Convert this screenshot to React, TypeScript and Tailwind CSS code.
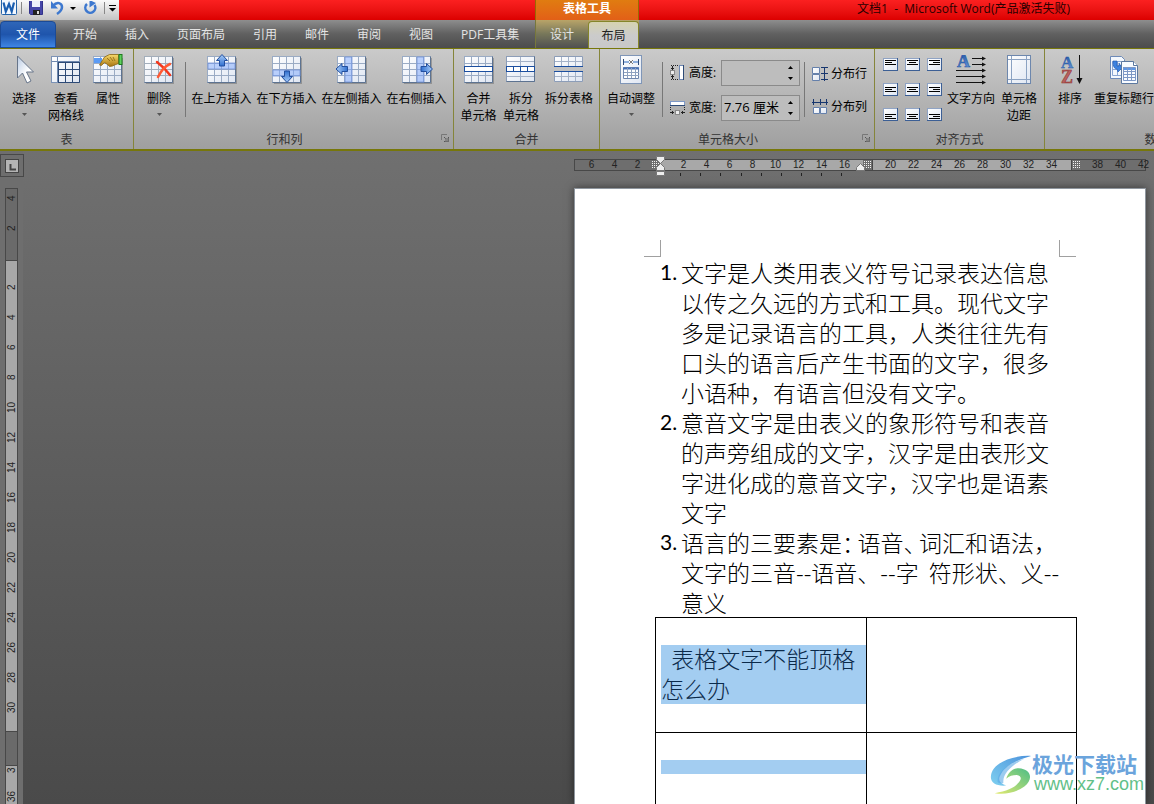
import type { ReactNode } from 'react';

const UI_FONT = "font-['Open_Sans','Noto_Sans_CJK_SC',sans-serif]";

const TABS = ['开始', '插入', '页面布局', '引用', '邮件', '审阅', '视图', 'PDF工具集'];

interface GridProps {
  line?: string;
  children?: ReactNode;
}

function GridIcon({ line = '#9aabc4', children }: GridProps) {
  return (
    <svg width="30" height="30" viewBox="0 0 30 30" className="overflow-visible" aria-hidden="true">
      <path d="M2 28.5h27.5V3" fill="none" stroke="#000" strokeOpacity=".22" />
      <rect x=".5" y="1.5" width="28" height="26" fill="url(#cell)" stroke={line} />
      <path d="M7.5 2v25M14.5 2v25M21.5 2v25M1 8.5h27M1 14.5h27M1 20.5h27" stroke={line} />
      <path d="M28.5 1.5v26h-28" fill="none" stroke="#5d7391" />
      {children}
    </svg>
  );
}

function SvgDefs() {
  return (
    <svg width="0" height="0" className="absolute" aria-hidden="true">
      <defs>
        <linearGradient id="cell" x1="0" y1="0" x2="1" y2="1">
          <stop offset="0" stopColor="#fff" />
          <stop offset="1" stopColor="#dfe6f2" />
        </linearGradient>
        <linearGradient id="arrow" x1="0" y1="0" x2="0" y2="1">
          <stop offset="0" stopColor="#a9cdf8" />
          <stop offset="1" stopColor="#2f6fd0" />
        </linearGradient>
        <linearGradient id="cursor" x1="0" y1="0" x2="1" y2="1">
          <stop offset="0" stopColor="#b9cbe4" />
          <stop offset=".6" stopColor="#fff" />
        </linearGradient>
        <linearGradient id="hand" x1="0" y1="0" x2="0" y2="1">
          <stop offset="0" stopColor="#f8da6a" />
          <stop offset="1" stopColor="#a87412" />
        </linearGradient>
        <linearGradient id="letterA" x1="0" y1="0" x2="0" y2="1">
          <stop offset="0" stopColor="#1d4fa0" />
          <stop offset="1" stopColor="#6fa0e0" />
        </linearGradient>
        <linearGradient id="swooshBlue" x1="1" y1="0" x2="0" y2="1">
          <stop offset="0" stopColor="#4d93dc" />
          <stop offset="1" stopColor="#7fd0f0" />
        </linearGradient>
        <linearGradient id="swooshGreen" x1="0" y1="1" x2="1" y2="0">
          <stop offset="0" stopColor="#e3ea70" />
          <stop offset="1" stopColor="#4dbd86" />
        </linearGradient>
      </defs>
    </svg>
  );
}

function CursorIcon() {
  return (
    <svg width="30" height="30" viewBox="0 0 30 30" aria-hidden="true">
      <path d="M8.5 1v22l5-5 4.5 10 4-2-4.500-9h7z" fill="url(#cursor)" stroke="#67758a" />
    </svg>
  );
}

function ViewGridIcon() {
  return (
    <svg width="30" height="30" viewBox="0 0 30 30" aria-hidden="true">
      <rect x=".5" y="1.5" width="28" height="26" fill="url(#cell)" stroke="#7c93b6" />
      <path d="M6.500 2v25M1 6.5h27" stroke="#6f88ae" />
      <path d="M7.5 7v20M14.5 7v20M21.5 7v20M7 7.5h21M7 14.5h21M7 20.5h21" stroke="#2d4a76" />
      <path d="M28.5 7v20.5H7" fill="none" stroke="#2d4a76" />
    </svg>
  );
}

function PropertiesIcon() {
  return (
    <GridIcon>
      <rect x="1" y="3" width="8" height="5" fill="#5b9bf5" />
      <path d="M6.500 10l5-8 5-2.500h9v9l-4 1.5-2 1-3 .5-2-2-3-2-3 3z" fill="url(#hand)" stroke="#8a6412" strokeWidth=".8" />
      <path d="M14 3l3 3M17 2l3 4M20 2l2 4" stroke="#8a6412" strokeWidth=".8" />
      <rect x="26" y="-.5" width="3" height="10" fill="#5fd05f" stroke="#1d7a1d" />
    </GridIcon>
  );
}

function DeleteIcon() {
  return (
    <GridIcon line="#a3aebb">
      <path d="M13 7c4 3 9 8 13 13" stroke="#f4371c" strokeWidth="2.500" fill="none" strokeLinecap="round" />
      <path d="M26 9c-5 2-9 7-12 13" stroke="#ff5a34" strokeWidth="2.500" fill="none" strokeLinecap="round" />
    </GridIcon>
  );
}

function InsertIcon({ side }: { side: 'up' | 'down' | 'left' | 'right' }) {
  const band = {
    up: 'M1 8h27v6H1z',
    down: 'M1 15h27v6H1z',
    left: 'M8 2h7v25H8z',
    right: 'M15 2h7v25h-7z',
  }[side];
  const turn = {
    up: 'translate(0 -1)',
    down: 'rotate(180 15 15) translate(0 2)',
    left: 'translate(-1.500 29) rotate(-90)',
    right: 'translate(31 -1) rotate(90)',
  }[side];
  return (
    <GridIcon>
      <path d={band} fill="#7ea8fb" fillOpacity=".5" stroke="#7593d6" strokeWidth=".8" />
      <path d="M15 .5l5.500 6h-3v5.500h-5V6.500h-3z" transform={turn} fill="url(#arrow)" stroke="#234f9e" />
    </GridIcon>
  );
}

function MergeIcon() {
  return (
    <GridIcon>
      <rect x=".5" y="11.5" width="28" height="5" fill="#fff" stroke="#1c4fa0" />
    </GridIcon>
  );
}

function SplitCellsIcon() {
  return (
    <svg width="30" height="30" viewBox="0 0 30 30" aria-hidden="true">
      <rect x=".5" y="1.5" width="28" height="25" fill="url(#cell)" stroke="#8c9db8" />
      <path d="M14.5 2v25M1 6.5h27M1 21.5h27" stroke="#a4b2c8" />
      <path d="M28.5 1.5v25h-28" fill="none" stroke="#5d7391" />
      <rect x=".5" y="11.5" width="28" height="5" fill="#fff" stroke="#1c4fa0" />
      <path d="M7.5 11v6M14.5 11v6M21.5 11v6" stroke="#1c4fa0" />
    </svg>
  );
}

function SplitTableIcon() {
  return (
    <svg width="30" height="30" viewBox="0 0 30 30" aria-hidden="true">
      <path d="M.5 1.5h28v10H.5zM.5 16.5h28v10H.5z" fill="url(#cell)" stroke="#8c9db8" />
      <path d="M7.5 2v9M14.5 2v9M21.5 2v9M1 6.5h27M7.5 17v9M14.5 17v9M21.5 17v9M1 21.5h27" stroke="#a4b2c8" />
      <path d="M0 11.5h29M0 16.5h29" stroke="#1c4fa0" />
    </svg>
  );
}

function AutoFitIcon() {
  return (
    <svg width="30" height="30" viewBox="0 0 30 30" aria-hidden="true">
      <rect x="4.5" y=".5" width="21" height="28" fill="url(#cell)" stroke="#7f96b8" />
      <path d="M7.5 4v6M22.5 4v6" stroke="#2d4a76" />
      <path d="M8 7h5M22 7h-5" stroke="#2d6ac0" />
      <path d="M13 5l4 4M17 5l-4 4" stroke="#555" strokeWidth=".8" />
      <path d="M7.5 12.5h15v11h-15z" fill="#fff" stroke="#6f86ad" />
      <path d="M7 13.5h16" stroke="#4a74b8" strokeWidth="2" />
      <path d="M11.5 13v10M15.5 13v10M19.5 13v10M8 17.5h15M8 20.5h15" stroke="#8fa2c0" />
    </svg>
  );
}

function HeightIcon() {
  return (
    <svg width="15" height="16" viewBox="0 0 15 16" aria-hidden="true">
      <path d="M1 .5h1M3 .5h1M5 .5h1M7 .5h1M1 14.5h1M3 14.5h1M5 14.5h1M7 14.5h1" stroke="#222" />
      <path d="M2.500 1v4M1 3.500h3M2.500 10v4M1 11.500h3" stroke="#222" />
      <rect x=".5" y="5.500" width="4" height="4" fill="#eee" stroke="#888" />
      <rect x="9.5" y=".5" width="4" height="14" fill="#fff" stroke="#6d87b3" />
      <path d="M13.5 0v15" stroke="#2d4a76" />
    </svg>
  );
}

function WidthIcon() {
  return (
    <svg width="15" height="16" viewBox="0 0 15 16" aria-hidden="true">
      <rect x=".5" y="1.5" width="14" height="4" fill="#fff" stroke="#7d98c6" />
      <path d="M0 5.500h15" stroke="#2d4a76" />
      <path d="M.5 7v1M.5 9v1M14.5 7v1M14.5 9v1M0 12.500h4M11 12.500h4M2.500 11v3M12.500 11v3" stroke="#222" />
      <rect x="5.500" y="10.500" width="4" height="4" fill="#eee" stroke="#888" />
    </svg>
  );
}

function RowsIcon() {
  return (
    <svg width="16" height="16" viewBox="0 0 16 16" aria-hidden="true">
      <path d="M.5 1.5h7v6h-7zM.5 8.500h7v6h-7z" fill="url(#cell)" stroke="#6580ab" />
      <path d="M9 1.5h7M9 7.5h7M9 13.5h7M12.5 1v14" stroke="#17366e" />
    </svg>
  );
}

function ColsIcon() {
  return (
    <svg width="16" height="16" viewBox="0 0 16 16" aria-hidden="true">
      <path d="M1.5 8.5h6v6h-6zM8.500 8.500h6v6h-6z" fill="url(#cell)" stroke="#6580ab" />
      <path d="M1.5 0v6M8.5 0v6M14.5 0v6M0 3.5h16" stroke="#17366e" />
    </svg>
  );
}

function AlignIcon({ h, v }: { h: number; v: number }) {
  return (
    <svg width="15" height="14" viewBox="0 0 15 14" aria-hidden="true">
      <rect x=".5" y=".5" width="14" height="12" fill="url(#cell)" stroke="#8fa3c4" />
      <path d="M14.5 0v13M0 12.500h15" stroke="#3c5f95" />
      {[11, 7, 11].map((w, i) => (
        <path key={i} d={`M${2 + ((11 - w) * h) / 2} ${2.5 + i * 2 + v * 2}h${w}`} stroke="#000" />
      ))}
    </svg>
  );
}

function TextDirectionIcon() {
  return (
    <svg width="30" height="30" viewBox="0 0 30 30" aria-hidden="true">
      <text x="1" y="12" fontFamily="Liberation Serif" fontWeight="bold" fontSize="18" fill="url(#letterA)" stroke="#1d4fa0" strokeWidth=".5">A</text>
      <path d="M16 3.500h12M16 9.500h12M0 15.500h28M0 21.500h28M0 27.500h28" stroke="#111" />
      <path d="M26 1.500l4 2-4 2zM26 7.500l4 2-4 2zM26 13.500l4 2-4 2zM26 19.500l4 2-4 2zM26 25.500l4 2-4 2z" fill="#111" />
    </svg>
  );
}

function MarginsIcon() {
  return (
    <svg width="30" height="30" viewBox="0 0 30 30" aria-hidden="true">
      <rect x="3.5" y=".5" width="23" height="28" fill="url(#cell)" stroke="#6d87ad" />
      <path d="M7.5 1v27M22.5 1v27M4 4.5h22M4 24.5h22" stroke="#8ba2c2" />
    </svg>
  );
}

function SortIcon() {
  return (
    <svg width="30" height="30" viewBox="0 0 30 30" aria-hidden="true">
      <text x="6" y="13" fontFamily="Liberation Serif" fontWeight="bold" fontSize="17" fill="url(#letterA)" stroke="#1d4fa0" strokeWidth=".4">A</text>
      <text x="6" y="28" fontFamily="Liberation Serif" fontWeight="bold" fontSize="18" fill="#b8615f" stroke="#8c2f2e" strokeWidth=".5">Z</text>
      <path d="M24.500 0v26" stroke="#111" />
      <path d="M21.500 23h6l-3 6z" fill="#111" />
    </svg>
  );
}

function RepeatHeaderIcon() {
  return (
    <svg width="30" height="30" viewBox="0 0 30 30" aria-hidden="true">
      <path d="M1.5 1.5h11l3 3v19h-14z" fill="#f4f8fd" stroke="#6d8ab8" />
      <path d="M3.500 6.500h9v14h-9zM3 10.500h10M3 14.500h10M8.500 6v14" fill="none" stroke="#8aa6d4" />
      <path d="M4 6h4v5h2V8l3 5-4 4-1-3c-3 0-4-3-4-8z" fill="#3d82e0" stroke="#1d55ac" strokeWidth=".6" />
      <path d="M12.5 6.5h12l4 4v18h-16z" fill="#f8fbff" stroke="#5c789f" />
      <path d="M24.5 6.5v4h4" fill="#fff" stroke="#5c789f" />
      <rect x="14" y="12" width="12" height="3" fill="#5c97e8" />
      <path d="M14.500 12.500h12v13h-12zM14 16.500h13M14 19.500h13M14 22.500h13M18.500 12v13M22.500 12v13" fill="none" stroke="#7d98c6" />
    </svg>
  );
}

function Caret() {
  return (
    <svg width="5" height="3" viewBox="0 0 5 3" className="mx-auto mt-1.5" aria-hidden="true">
      <path d="M0 0h5L2.500 3z" fill="#555" />
    </svg>
  );
}

interface BigButtonProps {
  icon: ReactNode;
  label: string;
  label2?: string;
  menu?: boolean;
  width: string;
}

function BigButton({ icon, label, label2, menu, width }: BigButtonProps) {
  return (
    <button className={`flex flex-col items-center shrink-0 pt-1 ${width}`}>
      {icon}
      <span className="mt-[5px] leading-[17px] whitespace-nowrap">{label}</span>
      {label2 && <span className="leading-[17px] whitespace-nowrap">{label2}</span>}
      {menu && <Caret />}
    </button>
  );
}

interface GroupProps {
  title: string;
  width: string;
  launcher?: boolean;
  children: ReactNode;
}

function Group({ title, width, launcher, children }: GroupProps) {
  return (
    <section className={`relative flex flex-col shrink-0 border-r border-[#85853a] ${width}`}>
      <div className="flex flex-1 px-[3px] pt-[2px]">{children}</div>
      <div className={`h-5 text-center leading-[22px] -mt-px text-[#333] ${launcher ? 'pr-[18px]' : ''}`}>{title}</div>
      {launcher && (
        <button aria-label={`${title}选项`} className="absolute right-1 bottom-[7px]">
          <svg width="8" height="8" viewBox="0 0 8 8" className="block">
            <path d="M.5 6V.5H6" fill="none" stroke="#777" />
            <path d="M3 3l2 2M7.500 3v5M3 7.500h5" stroke="#555" />
            <path d="M4 4h4v4H4z" fill="#777" fillOpacity=".7" />
          </svg>
        </button>
      )}
    </section>
  );
}

function Separator() {
  return <div className="w-px h-[55px] mt-[11px] shrink-0 bg-[#777]" />;
}

function SizeField({ id, label, icon, value }: { id: string; label: string; icon: ReactNode; value: string }) {
  return (
    <div className="flex items-center h-[26px]">
      {icon}
      <label htmlFor={id} className="ml-1 w-8 whitespace-nowrap">{label}</label>
      <div className="flex items-center w-[79px] h-[26px] border border-[#8a8a8a] bg-[#bdbdbd]">
        <input id={id} defaultValue={value} className="w-0 flex-1 px-[2px] bg-transparent text-[13px] outline-none" />
        <div className="flex flex-col gap-2 pr-1.5">
          <button aria-label={`${label}增加`}>
            <svg width="5" height="3" viewBox="0 0 5 3" className="block"><path d="M0 3h5L2.500 0z" /></svg>
          </button>
          <button aria-label={`${label}减少`}>
            <svg width="5" height="3" viewBox="0 0 5 3" className="block"><path d="M0 0h5L2.500 3z" /></svg>
          </button>
        </div>
      </div>
    </div>
  );
}

function QuickAccess() {
  return (
    <div className="flex items-center w-[119px] h-5 shrink-0 pl-px pb-1 bg-linear-to-b from-[#fafafa] to-[#c4c4c4]">
      <svg width="16" height="16" viewBox="0 0 16 16" aria-hidden="true">
        <rect x=".5" y="-1" width="15" height="15.500" rx="1" fill="#f3f8fe" stroke="#2463a8" />
        <path d="M2.500 2.500l2.300 9L8 4l2.700 7.500 2.300-9" fill="none" stroke="#1a5eb0" strokeWidth="2.200" />
      </svg>
      <div className="w-px h-3 ml-1 bg-[#888]" />
      <button aria-label="保存" className="ml-[7px]">
        <svg width="14" height="14" viewBox="0 0 14 14" className="block">
          <path d="M.5-1h13v14.500h-12l-1-1z" fill="#4646a8" stroke="#32328a" />
          <rect x="3" y="0" width="8" height="6" fill="#eef0fb" />
          <rect x="4" y="9" width="7" height="5" fill="#222" />
          <rect x="8" y="10" width="2" height="3" fill="#ddd" />
        </svg>
      </button>
      <button aria-label="撤消" className="ml-2 flex items-center">
        <svg width="13" height="14" viewBox="0 0 13 14">
          <path d="M2 5c4-5 9-3 9 1 0 3-2 5-5 7" fill="none" stroke="#3d78cf" strokeWidth="2.500" />
          <path d="M0 0v7.500h7z" fill="#3d78cf" />
        </svg>
        <svg width="6" height="3" viewBox="0 0 6 3" className="ml-1.5"><path d="M0 0h6L3 3z" /></svg>
      </button>
      <button aria-label="恢复" className="ml-2">
        <svg width="14" height="14" viewBox="0 0 14 14" className="block">
          <path d="M3 3a5 5 0 1 0 7.500 1" fill="none" stroke="#3d78cf" strokeWidth="2.500" />
          <path d="M5.500-1v7.500L12 2z" fill="#3d78cf" />
        </svg>
      </button>
      <div className="w-px h-3 ml-1.5 bg-[#888]" />
      <button aria-label="自定义快速访问工具栏" className="ml-1">
        <svg width="7" height="7" viewBox="0 0 7 7" className="block"><path d="M0 0h7v1H0zM0 3h7L3.500 6.500z" /></svg>
      </button>
    </div>
  );
}

function TitleBar() {
  return (
    <header className="flex h-5 text-xs leading-[18px] bg-linear-to-b from-[#fb2020] to-[#dc0000]">
      <QuickAccess />
      <div className="w-[416px] shrink-0" />
      <div className="w-[104px] shrink-0 border-x border-[#9a6a00] bg-linear-to-b from-[#e07c10] to-[#e25f17] text-center font-bold text-white">
        表格工具
      </div>
      <div className="flex-1 pr-[84px] text-right whitespace-pre text-[#2a0000]">
        文档1{'  '}- {' '}Microsoft Word(产品激活失败)
      </div>
    </header>
  );
}

function TabRow() {
  return (
    <nav className="flex h-7 text-xs leading-[30px] text-[#e4e4e4] bg-linear-to-b from-[#8e8e8e] via-[#606060] to-[#4c4c4c]">
      <button className="w-14 mt-px mr-[3px] rounded-t border border-[#1b4a96] bg-linear-to-b from-[#2f66b8] via-[#1f55ac] to-[#3f86e4] text-white leading-[26px]">
        文件
      </button>
      <div className="flex w-[476px] shrink-0">
        {TABS.map(tab => (
          <button key={tab} className="px-3.5 whitespace-nowrap">{tab}</button>
        ))}
      </div>
      <div className="flex w-[104px] shrink-0 border-l border-[#77773c] bg-linear-to-b from-[#b9a468] via-[#77775a] to-[#505050]">
        <button className="w-[52px]">设计</button>
        <button className="flex-1 mt-px h-7 rounded-t border border-b-0 border-[#85852a] bg-linear-to-b from-[#d6d3b0] via-[#cbcbcb] to-[#c8c8c8] text-[#222] leading-[26px]">
          布局
        </button>
      </div>
    </nav>
  );
}

function Ribbon() {
  return (
    <div className="flex h-[103px] shrink-0 text-xs text-black bg-linear-to-b from-[#cacaca] to-[#9f9f9f] border-t border-b-2 border-[#77770a]">
      <Group title="表" width="w-[134px]">
        <BigButton icon={<CursorIcon />} label="选择" menu width="w-[42px]" />
        <BigButton icon={<ViewGridIcon />} label="查看" label2="网格线" width="w-[42px]" />
        <BigButton icon={<PropertiesIcon />} label="属性" width="w-[42px]" />
      </Group>
      <Group title="行和列" width="w-[320px]" launcher>
        <BigButton icon={<DeleteIcon />} label="删除" menu width="w-[44px]" />
        <div className="w-1" />
        <Separator />
        <div className="w-[3px]" />
        <BigButton icon={<InsertIcon side="up" />} label="在上方插入" width="w-[65px]" />
        <BigButton icon={<InsertIcon side="down" />} label="在下方插入" width="w-[65px]" />
        <BigButton icon={<InsertIcon side="left" />} label="在左侧插入" width="w-[65px]" />
        <BigButton icon={<InsertIcon side="right" />} label="在右侧插入" width="w-[65px]" />
      </Group>
      <Group title="合并" width="w-[146px]">
        <BigButton icon={<MergeIcon />} label="合并" label2="单元格" width="w-[43px]" />
        <BigButton icon={<SplitCellsIcon />} label="拆分" label2="单元格" width="w-[42px]" />
        <BigButton icon={<SplitTableIcon />} label="拆分表格" width="w-[54px]" />
      </Group>
      <Group title="单元格大小" width="w-[275px]" launcher>
        <BigButton icon={<AutoFitIcon />} label="自动调整" menu width="w-[56px]" />
        <div className="w-[3px]" />
        <Separator />
        <div className="flex flex-col gap-[9px] pl-[7px] pr-1 pt-[9px]">
          <SizeField id="row-height" label="高度:" icon={<HeightIcon />} value="" />
          <SizeField id="col-width" label="宽度:" icon={<WidthIcon />} value="7.76 厘米" />
        </div>
        <Separator />
        <div className="flex flex-col gap-[17px] pl-[7px] pt-[15px] whitespace-nowrap">
          <button className="flex items-center gap-[3px] leading-4"><RowsIcon />分布行</button>
          <button className="flex items-center gap-[3px] leading-4"><ColsIcon />分布列</button>
        </div>
      </Group>
      <Group title="对齐方式" width="w-[170px]">
        <div className="grid grid-cols-3 gap-x-[7px] gap-y-[11px] content-start pl-[5px] pt-[7px]">
          {[0, 1, 2].map(v => [0, 1, 2].map(h => (
            <button key={`${v}-${h}`} aria-label={`对齐 ${v + 1}-${h + 1}`}><AlignIcon h={h} v={v} /></button>
          )))}
        </div>
        <BigButton icon={<TextDirectionIcon />} label="文字方向" width="w-[58px]" />
        <BigButton icon={<MarginsIcon />} label="单元格" label2="边距" width="w-[38px]" />
      </Group>
      <Group title="数据" width="w-[224px]">
        <BigButton icon={<SortIcon />} label="排序" width="w-[44px]" />
        <BigButton icon={<RepeatHeaderIcon />} label="重复标题行" width="w-[64px]" />
      </Group>
    </div>
  );
}

const H_MARKS = ['6', '4', '2', '', '2', '4', '6', '8', '10', '12', '14', '16', '', '20', '22', '24', '26', '28', '30', '32', '34', '', '38', '40', '42'];
const V_MARKS = ['2', '4', '6', '8', '10', '12', '14', '16', '18', '20', '22', '24', '26', '28', '30'];

function MoveMark() {
  return (
    <svg width="9" height="10" viewBox="0 0 9 10" className="block shrink-0" aria-hidden="true">
      <path d="M1.5 1v8M3.5 1v8M5.5 1v8M7.5 1v8" stroke="#f4f4f4" strokeDasharray="1 1" />
    </svg>
  );
}

function HorizontalRuler() {
  return (
    <div className="relative w-[572px] h-3 shrink-0 flex border border-[#484848] bg-[#6e6e6e] font-['Liberation_Sans',sans-serif] text-[10px] leading-[10px] text-[#222]">
      <div className="w-[76px]" />
      <MoveMark />
      <div className="w-[203px] bg-[#a8a8a8]" />
      <MoveMark />
      <div className="w-[200px] bg-[#a8a8a8] border-x border-[#484848]" />
      <MoveMark />
      <div className="absolute left-[5px] top-0 flex">
        {H_MARKS.map((mark, i) => (
          <span key={i} className="w-[23px] text-center">{mark}</span>
        ))}
      </div>
      <svg width="220" height="22" viewBox="0 0 220 22" className="absolute left-[76px] -top-1" aria-hidden="true">
        <path d="M5.5.5h8v3l-4 4-4-4zM5.5 14.5v-3l4-4 4 4v3zM5.5 15.5h8v4h-8z" fill="#eee" stroke="#777" />
        <path d="M29.5 17v3M49.5 17v3M69.5 17v3M90.5 17v3M110.5 17v3M130.5 17v3M150.5 17v3M170.5 17v3M190.5 17v3" stroke="#222" />
        <path d="M205.5 14.5v-3l4-4 4 4v3z" fill="#eee" stroke="#777" />
      </svg>
    </div>
  );
}

function VerticalRuler() {
  const mark = 'flex items-center justify-center h-[30px] [writing-mode:vertical-rl] rotate-180';
  return (
    <div className="w-[13px] ml-[5px] flex-1 border border-b-0 border-[#484848] font-['Liberation_Sans',sans-serif] text-[10px] leading-[11px] text-[#222] overflow-hidden">
      <div className="flow-root h-[71px] bg-[#6a6a6a]">
        <div className="-mt-1.5">
          <div className={mark}>4</div>
          <div className={mark}>2</div>
        </div>
      </div>
      <div className="h-[472px] pt-[11px] bg-[#a8a8a8] border-y border-[#484848]">
        {V_MARKS.map(m => <div key={m} className={mark}>{m}</div>)}
      </div>
      <div className="h-[33px] bg-[#6a6a6a]" />
      <div className="h-12 bg-[#a8a8a8] border-t border-[#484848]">
        <div className="flex items-center justify-center h-2 [writing-mode:vertical-rl] rotate-180">3</div>
        <div className="flex items-center justify-center h-[44px] [writing-mode:vertical-rl] rotate-180">36</div>
      </div>
    </div>
  );
}

function ListItem({ n, children }: { n: number; children: ReactNode }) {
  return (
    <li className="flex">
      <span className="w-[21px] shrink-0 font-['Lato',sans-serif] font-normal text-[21px]">{n}.</span>
      <p className="flex-1 whitespace-pre">{children}</p>
    </li>
  );
}

function Narrow({ children }: { children: ReactNode }) {
  return <span className="mr-1 [font-feature-settings:'halt']">{children}</span>;
}

function DocumentPage() {
  return (
    <article className="w-[572px] flex-1 mt-[17px] px-[69px] pt-[51px] shrink-0 overflow-hidden border border-b-0 border-[#8f969e] bg-white shadow-[0_0_8px_rgba(0,0,0,0.5)] font-['Noto_Sans_CJK_SC',sans-serif] font-light text-[23px] leading-[30px] text-black">
      <div className="flex justify-between h-[17px]">
        <div className="w-[17px] border-r border-b border-[#a0a0a0]" />
        <div className="w-[17px] border-l border-b border-[#a0a0a0]" />
      </div>
      <ol className="pl-4">
        <ListItem n={1}>
          文字是人类用表义符号记录表达信息<br />
          以传之久远的方式和工具。现代文字<br />
          多是记录语言的工具，人类往往先有<br />
          口头的语言后产生书面的文字，很多<br />
          小语种，有语言但没有文字。
        </ListItem>
        <ListItem n={2}>
          意音文字是由表义的象形符号和表音<br />
          的声旁组成的文字，汉字是由表形文<br />
          字进化成的意音文字，汉字也是语素<br />
          文字
        </ListItem>
        <ListItem n={3}>
          语言的三要素是<Narrow>：</Narrow>语音<Narrow>、</Narrow>词汇和语法，<br />
          文字的三音--语音、--字{'  '}符形状、义--<br />
          意义
        </ListItem>
      </ol>
      <table className="w-[422px] ml-[11px] table-fixed border-collapse">
        <tbody>
          <tr className="h-[115px]">
            <td className="border border-black pl-[5px] pt-[27px] align-top text-[#0b2a4a]">
              <div className="flow-root h-[59px] bg-[#a3cdf1]">
                <p className="-mt-0.5 whitespace-pre">{'  '}表格文字不能顶格<br />怎么办</p>
              </div>
            </td>
            <td className="border border-black" />
          </tr>
          <tr className="h-[115px]">
            <td className="border border-black pl-[5px] pt-[27px] align-top">
              <div className="h-3.5 bg-[#a3cdf1]" />
            </td>
            <td className="border border-black" />
          </tr>
        </tbody>
      </table>
    </article>
  );
}

function Watermark() {
  return (
    <div className="absolute right-2.5 bottom-1.5 flex items-center">
      <svg width="42" height="42" viewBox="0 0 44 42" aria-hidden="true">
        <path d="M43 1C22 0 2 9 1 22c-1 7 6 11 16 10C10 30 8 26 11 21 15 12 28 5 43 1z" fill="url(#swooshBlue)" />
        <path d="M8 28C7 18 20 8 36 4 24 10 13 19 14 29c0 1-5 1-6-1z" fill="#5aa8e4" fillOpacity=".6" />
        <path d="M30 14c13 1 16 11 6 19-8 6-20 9-31 7 12-2 20-5 24-10 4-4 5-8-1-9-4 0-8 1-11 4 2-7 7-11 13-11z" fill="url(#swooshGreen)" />
      </svg>
      <div className="flex flex-col pb-1">
        <span className="font-['Noto_Sans_CJK_SC',sans-serif] text-[21px] leading-[22px] font-bold text-[#6ba4dc]">极光下载站</span>
        <span className="pl-0.5 font-['Liberation_Sans',sans-serif] text-lg leading-5 text-[#62c088]">www.xz7.com</span>
      </div>
    </div>
  );
}

export default function App() {
  return (
    <div className={`relative flex flex-col h-screen overflow-hidden bg-[#666] ${UI_FONT}`}>
      <SvgDefs />
      <TitleBar />
      <TabRow />
      <Ribbon />
      <main className="flex flex-1 min-h-0 bg-linear-to-b from-[#707070] to-[#4a4a4a]">
        <aside className="flex flex-col w-[23px] shrink-0 bg-[#6e6e6e]">
          <button aria-label="制表符" className="flex items-center justify-center w-6 h-[23px] mt-[3px] mb-[11px] shrink-0 border border-[#484848]">
            <svg width="14" height="14" viewBox="0 0 14 14">
              <rect x=".5" y=".5" width="13" height="13" fill="#b4b4b4" stroke="#444" />
              <path d="M5.500 5v5.500H11" fill="none" stroke="#444" strokeWidth="2" />
            </svg>
          </button>
          <VerticalRuler />
        </aside>
        <div className="flex flex-1 flex-col items-end pt-2 pr-2 min-w-0">
          <HorizontalRuler />
          <DocumentPage />
        </div>
      </main>
      <Watermark />
    </div>
  );
}
